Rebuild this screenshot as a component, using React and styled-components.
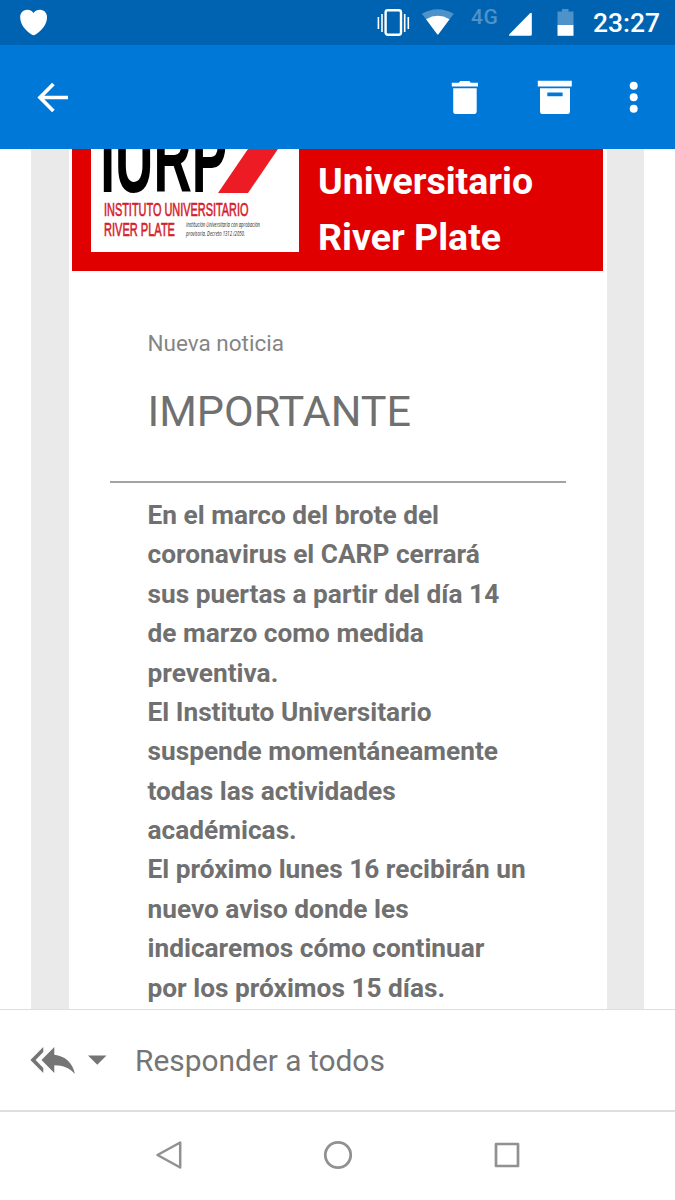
import React from "react";
import styled, { createGlobalStyle } from "styled-components";

const GlobalStyle = createGlobalStyle`
  body {
    margin: 0;
    background-color: #fff;
    font-family: Roboto, sans-serif;
  }
`;

const Screen = styled.div`
  display: flex;
  flex-direction: column;
  width: 675px;
  height: 1200px;
  overflow: hidden;
`;

const StatusBar = styled.div`
  display: flex;
  align-items: center;
  flex: none;
  height: 45px;
  padding: 0 15px 0 20px;
  background-color: #0063b1;
  box-sizing: border-box;

  svg {
    display: block;
    flex: none;
  }
`;

const StatusIcons = styled.div`
  display: flex;
  align-items: flex-start;
  height: 45px;
  margin-left: auto;
`;

const StatusIcon = styled.svg`
  height: 45px;
  margin-left: ${(props) => props.$gap || 0}px;
`;

const Network = styled.span`
  width: 28px;
  margin: 7px 9px 0 17px;
  color: #4d92c8;
  font-size: 21px;
  font-weight: 500;
  line-height: 20px;
  letter-spacing: 0.6px;
`;

const Clock = styled.span`
  width: 67px;
  margin-left: 19px;
  color: #fff;
  font-size: 26.4px;
  font-weight: 500;
  line-height: 46px;
`;

const Toolbar = styled.div`
  display: flex;
  align-items: center;
  flex: none;
  height: 104px;
  padding: 0 36px;
  background-color: #0078d7;
  box-sizing: border-box;
`;

const ToolbarActions = styled.div`
  display: flex;
  align-items: center;
  margin-left: auto;
`;

const IconButton = styled.button`
  display: flex;
  padding: 0;
  border: 0;
  background: none;
  margin-left: ${(props) => props.$gap || 0}px;
  cursor: pointer;
`;

const Mail = styled.div`
  display: flex;
  flex: none;
  justify-content: center;
  height: 860px;
  overflow: hidden;
`;

const Backdrop = styled.div`
  width: 538px;
  border: solid #eaeaea;
  border-width: 0 37px 0 38px;
`;

const Banner = styled.div`
  display: flex;
  height: 121.5px;
  margin: 0 4px 0 3px;
  background-color: #e00000;
`;

const LogoBox = styled.div`
  width: 208px;
  height: 103px;
  margin-left: 19px;
  background-color: #fff;
`;

const BannerTitle = styled.h1`
  margin: 4px 0 0 19px;
  color: #fff;
  font-size: 37.5px;
  font-weight: 700;
  line-height: 56.25px;
`;

const Heading = styled.div`
  margin: 0 41px;
  padding: 55.5px 37.5px 38px;
  border-bottom: 2px solid #a3a3a3;
`;

const Label = styled.p`
  margin: 0 0 21px;
  color: #858585;
  font-size: 22.5px;
  line-height: 34px;
`;

const Title = styled.h2`
  margin: 0;
  color: #707070;
  font-size: 43.1px;
  font-weight: 400;
  line-height: 62px;
`;

const Paragraph = styled.p`
  margin: 13px 0 0 78.5px;
  color: #707070;
  font-size: 26.25px;
  font-weight: 700;
  line-height: 39.375px;
  white-space: nowrap;
`;

const ReplyBar = styled.div`
  display: flex;
  align-items: center;
  flex: none;
  height: 103px;
  padding-left: 30px;
  border-top: 1px solid #dedede;
  border-bottom: 2px solid #dfdfdf;
  box-sizing: border-box;
`;

const Caret = styled.svg`
  width: 19px;
  height: 10px;
  margin-left: 12px;
`;

const ReplyText = styled.span`
  margin: 1px 0 0 28px;
  color: #757575;
  font-size: 29.9px;
  line-height: 40px;
`;

const NavBar = styled.div`
  display: flex;
  align-items: center;
  justify-content: center;
  gap: 139px;
  flex: 1;
  padding: 0 0 2px;
`;

function Logo() {
  return (
    <svg width="208" height="103" viewBox="91 149 208 103">
      <g fontFamily="Liberation Sans, Arial, sans-serif">
        <text x="100.3" y="191.7" fontSize="98" fontWeight="700" textLength="127" lengthAdjust="spacingAndGlyphs">IURP</text>
        <path d="M248 149h30l-30 44h-30z" fill="#ed1c24" />
        <g fill="#d5202b" stroke="#d5202b" strokeWidth="0.6">
          <text x="104" y="216" fontSize="17.5" textLength="144.5" lengthAdjust="spacingAndGlyphs">INSTITUTO UNIVERSITARIO</text>
          <text x="104" y="236.3" fontSize="17.5" textLength="71" lengthAdjust="spacingAndGlyphs">RIVER PLATE</text>
        </g>
        <g fill="#222" fontFamily="Open Sans, sans-serif" fontSize="6.5" fontStyle="italic">
          <text x="186" y="226.5" textLength="74" lengthAdjust="spacingAndGlyphs">Institución Universitaria con aprobación</text>
          <text x="186" y="235.5" textLength="59" lengthAdjust="spacingAndGlyphs">provisoria. Decreto 1312 /2050.</text>
        </g>
      </g>
    </svg>
  );
}

function App() {
  return (
    <>
      <GlobalStyle />
      <Screen>
        <StatusBar>
          <svg width="28" height="45" fill="#fff">
            <path d="M13.5 13C11.7 10.6 9.6 9.7 7 9.8 3 10 .2 13 .2 17c0 8 5.5 13.5 11.4 17.5q2 1.3 4 0C21.5 30.5 27 25 27 17c0-4-2.8-7-6.8-7.2-2.6-.1-4.9.8-6.7 3.2z" />
          </svg>
          <StatusIcons>
            {/* vibrate */}
            <StatusIcon width="34" fill="none" stroke="#fff">
              <rect x="9.6" y="10.3" width="15.4" height="24.4" rx="2.2" strokeWidth="2.4" />
              <path d="M6 14v18M28.7 14v18" strokeWidth="1.6" />
              <path d="M2.4 17v12M32.3 17v12" strokeWidth="1.6" />
            </StatusIcon>
            {/* wifi */}
            <StatusIcon width="33" $gap={11}>
              <path d="M.8 13.8Q16.8 4.5 32.8 13.8L17.3 33.9q-.5.7-1 0z" fill="#4d92c8" />
              <path d="M5.1 19.2Q16.8 12.3 28.5 19.2L17.6 34q-.8 1-1.6 0z" fill="#fff" />
            </StatusIcon>
            <Network>4G</Network>
            {/* signal */}
            <StatusIcon width="24" fill="#fff">
              <path d="M22 13.2q1.8-1.1 1.8.7V34.5q0 1.3-1.3 1.3H2.3q-2 0-.9-1.5z" />
            </StatusIcon>
            {/* battery */}
            <StatusIcon width="17" $gap={25}>
              <path d="M5 9h6.5v2.5H16.5V25H.5V11.5H5z" fill="#4d92c8" />
              <path d="M.5 25h16v10.8H.5z" fill="#fff" />
            </StatusIcon>
            <Clock>23:27</Clock>
          </StatusIcons>
        </StatusBar>

        <Toolbar>
          <IconButton>
            <svg width="34" height="34" fill="none" stroke="#fff" strokeWidth="3.7">
              <path d="M17.4 4 4 17.5 17.4 31M4 17.5h28" />
            </svg>
          </IconButton>
          <ToolbarActions>
            <IconButton>
              <svg width="28" height="36" fill="#fff">
                <path d="M1.8 3.7h7l1.5-1.8h9L20.8 3.7h7.2v3.8H1.8z" />
                <path d="M3.2 9.2h23.5V31.9q0 3.2-3.2 3.2H6.4q-3.2 0-3.2-3.2z" />
              </svg>
            </IconButton>
            <IconButton $gap={58}>
              <svg width="36" height="36" fill="#fff">
                <path d="M1.8 1.7h34v5.8H1.8z" />
                <path fillRule="evenodd" d="M4 9.2h30V31.9q0 3.2-3.2 3.2H7.2q-3.2 0-3.2-3.2zM11.3 13.4v3.8h15.3V13.4z" />
              </svg>
            </IconButton>
            <IconButton $gap={57}>
              <svg width="10" height="34" fill="#fff">
                <circle cx="4.7" cy="5.7" r="4" />
                <circle cx="4.7" cy="17.2" r="4" />
                <circle cx="4.7" cy="28.7" r="4" />
              </svg>
            </IconButton>
          </ToolbarActions>
        </Toolbar>

        <Mail>
          <Backdrop>
            <Banner>
              <LogoBox>
                <Logo />
              </LogoBox>
              <BannerTitle>
                Universitario<br />
                River Plate
              </BannerTitle>
            </Banner>
            <Heading>
              <Label>Nueva noticia</Label>
              <Title>IMPORTANTE</Title>
            </Heading>
            <Paragraph>
              En el marco del brote del<br />
              coronavirus el CARP cerrará<br />
              sus puertas a partir del día 14<br />
              de marzo como medida<br />
              preventiva.<br />
              El Instituto Universitario<br />
              suspende momentáneamente<br />
              todas las actividades<br />
              académicas.<br />
              El próximo lunes 16 recibirán un<br />
              nuevo aviso donde les<br />
              indicaremos cómo continuar<br />
              por los próximos 15 días.
            </Paragraph>
          </Backdrop>
        </Mail>

        <ReplyBar>
          <svg width="46" height="34" fill="#757575">
            <path d="M13.3 4v5L5.6 17l7.7 8v5L.4 17z" />
            <path d="M24.3 4v7.8C35 13 42.5 19.5 45 31c-5-6-11.5-8.7-20.7-8.8v7.8L11.5 17z" />
          </svg>
          <Caret fill="#757575">
            <path d="M0 .5h18.5L9.25 9.7z" />
          </Caret>
          <ReplyText>Responder a todos</ReplyText>
        </ReplyBar>

        <NavBar>
          <svg width="30" height="30" fill="none" stroke="#919191" strokeWidth="2.5" strokeLinejoin="round">
            <path d="M26.2 2.5v25L3.5 15z" />
          </svg>
          <svg width="30" height="30" fill="none" stroke="#919191" strokeWidth="2.8">
            <circle cx="15" cy="15" r="12.7" />
          </svg>
          <svg width="30" height="30" fill="none" stroke="#919191" strokeWidth="2.7" strokeLinejoin="round">
            <rect x="4" y="4" width="22" height="22" />
          </svg>
        </NavBar>
      </Screen>
    </>
  );
}

export default App;
